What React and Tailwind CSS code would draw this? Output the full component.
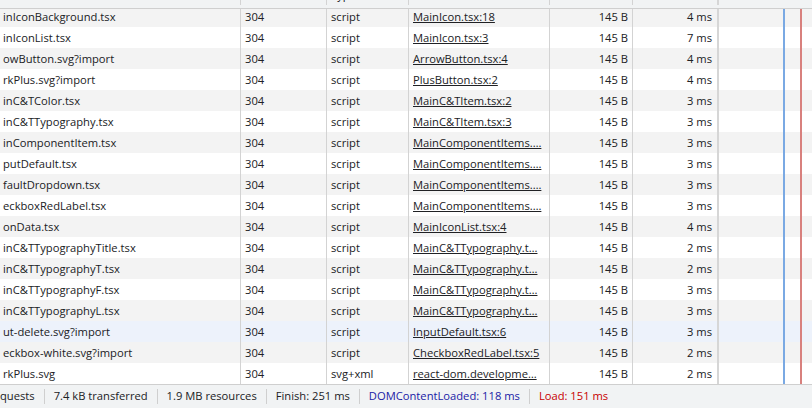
const rows = [
  ['inIconBackground.tsx', '304', 'script', 'MainIcon.tsx:18', '145 B', '4 ms'],
  ['inIconList.tsx', '304', 'script', 'MainIcon.tsx:3', '145 B', '7 ms'],
  ['owButton.svg?import', '304', 'script', 'ArrowButton.tsx:4', '145 B', '4 ms'],
  ['rkPlus.svg?import', '304', 'script', 'PlusButton.tsx:2', '145 B', '4 ms'],
  ['inC&TColor.tsx', '304', 'script', 'MainC&TItem.tsx:2', '145 B', '3 ms'],
  ['inC&TTypography.tsx', '304', 'script', 'MainC&TItem.tsx:3', '145 B', '3 ms'],
  ['inComponentItem.tsx', '304', 'script', 'MainComponentItems.…', '145 B', '3 ms'],
  ['putDefault.tsx', '304', 'script', 'MainComponentItems.…', '145 B', '3 ms'],
  ['faultDropdown.tsx', '304', 'script', 'MainComponentItems.…', '145 B', '3 ms'],
  ['eckboxRedLabel.tsx', '304', 'script', 'MainComponentItems.…', '145 B', '3 ms'],
  ['onData.tsx', '304', 'script', 'MainIconList.tsx:4', '145 B', '4 ms'],
  ['inC&TTypographyTitle.tsx', '304', 'script', 'MainC&TTypography.t…', '145 B', '2 ms'],
  ['inC&TTypographyT.tsx', '304', 'script', 'MainC&TTypography.t…', '145 B', '2 ms'],
  ['inC&TTypographyF.tsx', '304', 'script', 'MainC&TTypography.t…', '145 B', '3 ms'],
  ['inC&TTypographyL.tsx', '304', 'script', 'MainC&TTypography.t…', '145 B', '3 ms'],
  ['ut-delete.svg?import', '304', 'script', 'InputDefault.tsx:6', '145 B', '3 ms'],
  ['eckbox-white.svg?import', '304', 'script', 'CheckboxRedLabel.tsx:5', '145 B', '2 ms'],
  ['rkPlus.svg', '304', 'svg+xml', 'react-dom.developme…', '145 B', '2 ms'],
];

function Row({ r, i }) {
  let bg = i % 2 === 0 ? 'bg-[#f3f3f3]' : 'bg-white';
  if (i === 15) bg = 'bg-[#edf2fb]';
  return (
    <div className={'flex h-[21px] leading-[21px] ' + bg}>
      <div className="w-[241px] shrink-0 border-r border-[#d3d3d3] pl-[3px] truncate">{r[0]}</div>
      <div className="w-[86px] shrink-0 border-r border-[#d3d3d3] pl-[4px] truncate">{r[1]}</div>
      <div className="w-[82px] shrink-0 border-r border-[#d3d3d3] pl-[4px] truncate">{r[2]}</div>
      <div className="w-[141px] shrink-0 border-r border-[#d3d3d3] pl-[4px] pr-[4px] truncate">
        <span className="underline">{r[3]}</span>
      </div>
      <div className="w-[83px] shrink-0 border-r border-[#d3d3d3] pr-[4px] text-right">{r[4]}</div>
      <div className="w-[86px] shrink-0 border-r-2 border-[#d6d6d6] pr-[5px] text-right">{r[5]}</div>
      <div className="flex-1" />
    </div>
  );
}

function Sep() {
  return <div className="w-px h-[15px] bg-[#cfcfcf] mx-[9px]" />;
}

export default function App() {
  return (
    <div
      className="w-[812px] h-[408px] flex flex-col bg-white text-[#202124] text-[11.2px] overflow-hidden"
      style={{ fontFamily: '"Segoe UI", "Open Sans", sans-serif' }}
    >
      {/* header, scrolled up so only the descenders show */}
      <div className="h-[9px] shrink-0 overflow-hidden bg-[#f1f3f4] border-b border-[#cfcfcf]">
        <div className="flex h-[21px] leading-[21px] -mt-[16px]">
          <div className="w-[241px] shrink-0 border-r border-[#d3d3d3] pl-[3px]">Name</div>
          <div className="w-[86px] shrink-0 border-r border-[#d3d3d3] pl-[4px]">Status</div>
          <div className="w-[82px] shrink-0 border-r border-[#d3d3d3] pl-[4px]">Type</div>
          <div className="w-[141px] shrink-0 border-r border-[#d3d3d3] pl-[4px]">Initiator</div>
          <div className="w-[83px] shrink-0 border-r border-[#d3d3d3] pr-[4px] text-right">Size</div>
          <div className="w-[86px] shrink-0 border-r-2 border-[#d6d6d6] pr-[5px] text-right">Time</div>
          <div className="flex-1" />
        </div>
      </div>

      <div className="relative h-[375px] shrink-0 overflow-hidden">
        <div className="-mt-[3px]">
          {rows.map((r, i) => (
            <Row key={i} r={r} i={i} />
          ))}
        </div>
        <div className="absolute top-0 bottom-0 left-[783px] w-[2px] bg-[#7aa9e3]" />
        <div className="absolute top-0 bottom-0 left-[800px] w-[2px] bg-[#d8807d]" />
      </div>

      <div className="flex-1 flex items-center bg-[#f1f3f4] border-t border-[#cfcfcf] whitespace-nowrap">
        <span>quests</span>
        <Sep />
        <span>7.4 kB transferred</span>
        <Sep />
        <span>1.9 MB resources</span>
        <Sep />
        <span>Finish: 251 ms</span>
        <Sep />
        <span className="text-[#1a1aa6]">DOMContentLoaded: 118 ms</span>
        <Sep />
        <span className="text-[#c80000]">Load: 151 ms</span>
      </div>
    </div>
  );
}
